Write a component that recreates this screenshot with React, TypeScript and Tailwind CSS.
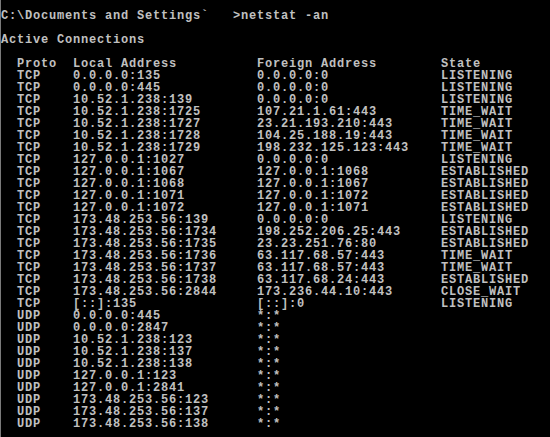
import React from 'react';

const rows: [string, string, string, string][] = [
  ['TCP', '0.0.0.0:135', '0.0.0.0:0', 'LISTENING'],
  ['TCP', '0.0.0.0:445', '0.0.0.0:0', 'LISTENING'],
  ['TCP', '10.52.1.238:139', '0.0.0.0:0', 'LISTENING'],
  ['TCP', '10.52.1.238:1725', '107.21.1.61:443', 'TIME_WAIT'],
  ['TCP', '10.52.1.238:1727', '23.21.193.210:443', 'TIME_WAIT'],
  ['TCP', '10.52.1.238:1728', '104.25.188.19:443', 'TIME_WAIT'],
  ['TCP', '10.52.1.238:1729', '198.232.125.123:443', 'TIME_WAIT'],
  ['TCP', '127.0.0.1:1027', '0.0.0.0:0', 'LISTENING'],
  ['TCP', '127.0.0.1:1067', '127.0.0.1:1068', 'ESTABLISHED'],
  ['TCP', '127.0.0.1:1068', '127.0.0.1:1067', 'ESTABLISHED'],
  ['TCP', '127.0.0.1:1071', '127.0.0.1:1072', 'ESTABLISHED'],
  ['TCP', '127.0.0.1:1072', '127.0.0.1:1071', 'ESTABLISHED'],
  ['TCP', '173.48.253.56:139', '0.0.0.0:0', 'LISTENING'],
  ['TCP', '173.48.253.56:1734', '198.252.206.25:443', 'ESTABLISHED'],
  ['TCP', '173.48.253.56:1735', '23.23.251.76:80', 'ESTABLISHED'],
  ['TCP', '173.48.253.56:1736', '63.117.68.57:443', 'TIME_WAIT'],
  ['TCP', '173.48.253.56:1737', '63.117.68.57:443', 'TIME_WAIT'],
  ['TCP', '173.48.253.56:1738', '63.117.68.24:443', 'ESTABLISHED'],
  ['TCP', '173.48.253.56:2844', '173.236.44.10:443', 'CLOSE_WAIT'],
  ['TCP', '[::]:135', '[::]:0', 'LISTENING'],
  ['UDP', '0.0.0.0:445', '*:*', ''],
  ['UDP', '0.0.0.0:2847', '*:*', ''],
  ['UDP', '10.52.1.238:123', '*:*', ''],
  ['UDP', '10.52.1.238:137', '*:*', ''],
  ['UDP', '10.52.1.238:138', '*:*', ''],
  ['UDP', '127.0.0.1:123', '*:*', ''],
  ['UDP', '127.0.0.1:2841', '*:*', ''],
  ['UDP', '173.48.253.56:123', '*:*', ''],
  ['UDP', '173.48.253.56:137', '*:*', ''],
  ['UDP', '173.48.253.56:138', '*:*', ''],
];

const App: React.FC = () => {
  return (
    <div className="w-[550px] h-[437px] overflow-hidden bg-black border-l border-[#7a7a7a] pt-[10px] text-[#c0c0c0] font-['Liberation_Mono',monospace] font-bold text-[12px] tracking-[0.8px] leading-[12px] whitespace-pre">
      <div>C:\Documents and Settings`   &gt;netstat -an</div>
      <div className="h-[12px]" />
      <div>Active Connections</div>
      <div className="h-[12px]" />

      {/* connection table */}
      <div className="grid grid-cols-[56px_184px_184px_auto] pl-[16px]">
        <div>Proto</div>
        <div>Local Address</div>
        <div>Foreign Address</div>
        <div>State</div>
        {rows.map((r, i) => (
          <React.Fragment key={i}>
            <div>{r[0]}</div>
            <div>{r[1]}</div>
            <div>{r[2]}</div>
            <div>{r[3]}</div>
          </React.Fragment>
        ))}
      </div>
    </div>
  );
};

export default App;
